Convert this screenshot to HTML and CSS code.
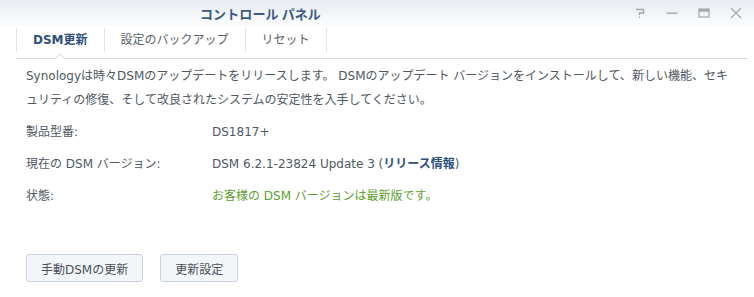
FILE: index.html
```html
<!DOCTYPE html>
<html lang="ja">
<head>
<meta charset="utf-8">
<link rel="stylesheet" href="styles.css">
</head>
<body>
<div class="window">
  <div class="titlebar">
    <div class="title">コントロール パネル</div>
    <div class="controls">
      <svg class="ctl" width="12" height="12" viewBox="0 0 12 12"><path d="M2 2.5h7.5v3.5H5.5v2" fill="none" stroke="#a3a8ae" stroke-width="1.4"/><rect x="4.8" y="9.5" width="1.4" height="1.5" fill="#a3a8ae"/></svg>
      <svg class="ctl" width="12" height="12" viewBox="0 0 12 12"><rect x="0.5" y="5.5" width="11" height="1.4" fill="#a3a8ae"/></svg>
      <svg class="ctl" width="12" height="12" viewBox="0 0 12 12"><rect x="1" y="2" width="10" height="8" fill="none" stroke="#a3a8ae" stroke-width="1.2"/><rect x="1" y="2" width="10" height="2.6" fill="#a3a8ae"/></svg>
      <svg class="ctl" width="12" height="12" viewBox="0 0 12 12"><path d="M1 1l10 10M11 1L1 11" stroke="#a3a8ae" stroke-width="1.2"/></svg>
    </div>
  </div>
  <div class="tabs">
    <div class="tab active">DSM更新</div>
    <div class="tab">設定のバックアップ</div>
    <div class="tab">リセット</div>
    <span class="caret"></span>
  </div>
  <div class="content">
    <p class="desc">Synologyは時々DSMのアップデートをリリースします。 DSMのアップデート バージョンをインストールして、新しい機能、セキュリティの修復、そして改良されたシステムの安定性を入手してください。</p>
    <div class="row"><div class="label">製品型番:</div><div class="value">DS1817+</div></div>
    <div class="row"><div class="label">現在の DSM バージョン:</div><div class="value">DSM 6.2.1-23824 Update 3 (<span class="link">リリース情報</span>)</div></div>
    <div class="row"><div class="label">状態:</div><div class="value ok">お客様の DSM バージョンは最新版です。</div></div>
    <div class="buttons">
      <button class="btn">手動DSMの更新</button>
      <button class="btn">更新設定</button>
    </div>
  </div>
</div>
</body>
</html>
```
FILE: styles.css
```css
* { box-sizing: border-box; }
html, body { margin: 0; padding: 0; background: #fff; }
body {
  font-family: "DejaVu Sans", "Noto Sans CJK JP", sans-serif;
  font-size: 12px;
  color: #4f5862;
  width: 754px;
  height: 297px;
  overflow: hidden;
}
.window { width: 754px; }
.titlebar {
  height: 26px;
  display: flex;
  align-items: center;
  justify-content: space-between;
  background: linear-gradient(#e8ecf1, #fbfcfd);
  padding: 0 12px 0 200px;
}
.title {
  font-family: "Noto Sans CJK JP", sans-serif;
  font-weight: bold;
  font-size: 13px;
  color: #3b5a84;
  letter-spacing: 0.1px;
}
.controls { display: flex; gap: 20px; align-items: center; }
.ctl { display: block; }
.tabs {
  position: relative;
  margin: 0 6px 0 16px;
  height: 33px;
  border-bottom: 1px solid #d5dae0;
  display: flex;
  align-items: flex-start;
  padding-top: 2px;
  border-left: none;
}
.tab {
  height: 24px;
  line-height: 24px;
  padding: 0 16px;
  border-right: 1px solid #dde2e8;
  color: #5a6169;
}
.tab:first-child { border-left: 1px solid #dde2e8; }
.tab.active { color: #2f4e7a; font-weight: bold; }
.caret {
  position: absolute;
  left: 40px;
  bottom: -5px;
  width: 8px;
  height: 8px;
  background: #fff;
  border-top: 1px solid #d5dae0;
  border-left: 1px solid #d5dae0;
  transform: rotate(45deg);
}
.content { padding: 5px 20px 0 26px; }
.desc { margin: 0 0 4px; line-height: 24px; }
.row { display: flex; line-height: 32px; }
.label { width: 186px; }
.link { color: #2d4f82; font-weight: bold; }
.ok { color: #5ca02e; }
.buttons { display: flex; gap: 17px; margin-top: 42px; }
.btn {
  font-family: "DejaVu Sans", "Noto Sans CJK JP", sans-serif;
  font-size: 12px;
  color: #4a5058;
  height: 28px;
  padding: 0 14px;
  background: #f3f6f9;
  border: 1px solid #c9d1da;
  border-radius: 3px;
}
```
